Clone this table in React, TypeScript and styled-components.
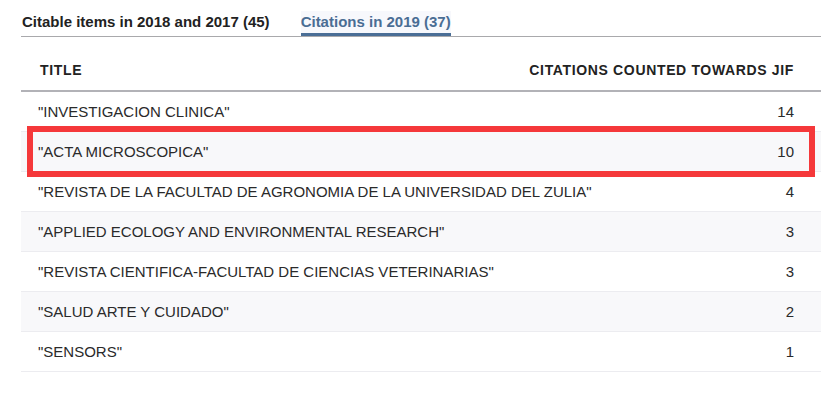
import React from 'react';
import styled, { createGlobalStyle } from 'styled-components';

type Citation = { title: string; count: number; flagged?: boolean };

const rows: Citation[] = [
  { title: 'INVESTIGACION CLINICA', count: 14 },
  { title: 'ACTA MICROSCOPICA', count: 10, flagged: true },
  { title: 'REVISTA DE LA FACULTAD DE AGRONOMIA DE LA UNIVERSIDAD DEL ZULIA', count: 4 },
  { title: 'APPLIED ECOLOGY AND ENVIRONMENTAL RESEARCH', count: 3 },
  { title: 'REVISTA CIENTIFICA-FACULTAD DE CIENCIAS VETERINARIAS', count: 3 },
  { title: 'SALUD ARTE Y CUIDADO', count: 2 },
  { title: 'SENSORS', count: 1 },
];

const GlobalStyle = createGlobalStyle`
  body {
    margin: 0;
    background: #fff;
    font-family: 'Liberation Sans', Arial, sans-serif;
    color: #222;
  }
`;

const Page = styled.div`
  width: 800px;
  padding: 11px 18px 0 21px;
`;

const TabBar = styled.div`
  display: flex;
  gap: 31px;
  border-bottom: 1px solid #a9a9ac;
  padding-left: 1px;
`;

const Tab = styled.div<{ $active?: boolean }>`
  font-size: 15px;
  font-weight: bold;
  line-height: 22px;
  color: ${(p) => (p.$active ? '#4a6d94' : '#222')};
  background: ${(p) => (p.$active ? '#f7f8fc' : 'transparent')};
  border-bottom: 3px solid ${(p) => (p.$active ? '#4a6e96' : 'transparent')};
`;

const Table = styled.div`
  display: flex;
  flex-direction: column;
`;

const HeadRow = styled.div`
  display: flex;
  justify-content: space-between;
  align-items: flex-end;
  height: 55px;
  padding: 0 27px 12px 19px;
  box-sizing: border-box;
  border-bottom: 2px solid #b2b2b7;
  font-size: 14px;
  font-weight: bold;
  color: #222;
  letter-spacing: 0.65px;
`;

const Row = styled.div<{ $striped: boolean }>`
  position: relative;
  display: flex;
  justify-content: space-between;
  align-items: center;
  height: 39px;
  padding: 0 27px 0 17px;
  border-bottom: 1px solid #ececf0;
  background: ${(p) => (p.$striped ? '#f8f8fa' : '#fff')};
  font-size: 15px;
  color: #2a2a2a;
`;

const Highlight = styled.div`
  position: absolute;
  z-index: 1;
  left: 6px;
  right: 6px;
  top: -6px;
  bottom: -6px;
  border: 6px solid #f5383a;
  pointer-events: none;
`;

export default function App() {
  return (
    <Page>
      <GlobalStyle />
      <TabBar>
        <Tab>Citable items in 2018 and 2017 (45)</Tab>
        <Tab $active>Citations in 2019 (37)</Tab>
      </TabBar>
      <Table>
        <HeadRow>
          <span>TITLE</span>
          <span>CITATIONS COUNTED TOWARDS JIF</span>
        </HeadRow>
        {rows.map((r, i) => (
          <Row key={r.title} $striped={i % 2 === 1}>
            <span>"{r.title}"</span>
            <span>{r.count}</span>
            {r.flagged && <Highlight />}
          </Row>
        ))}
      </Table>
    </Page>
  );
}
